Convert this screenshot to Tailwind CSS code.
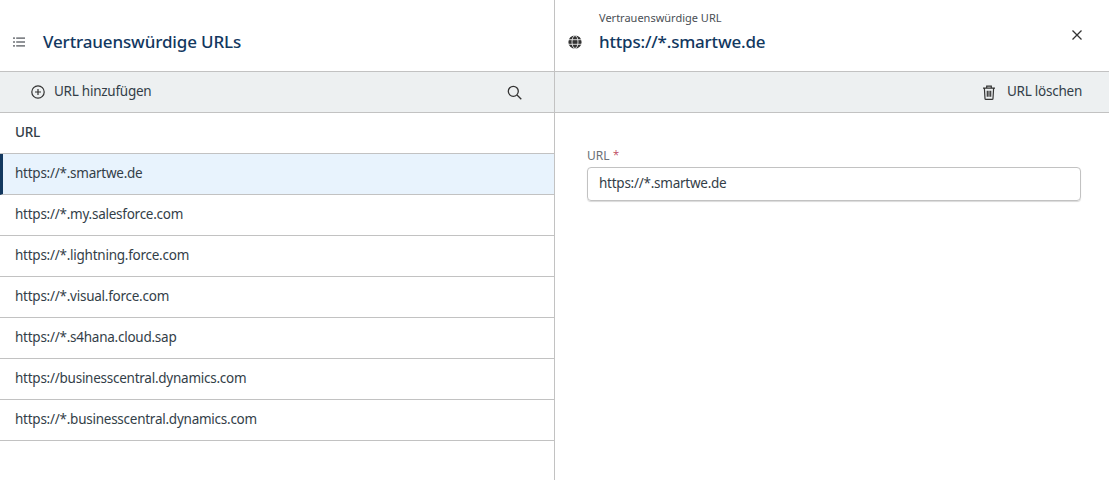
<!DOCTYPE html>
<html lang="de">
<head>
<meta charset="utf-8">
<title>Vertrauenswürdige URLs</title>
<script src="https://cdn.jsdelivr.net/npm/@tailwindcss/browser@4"></script>
</head>
<body class="bg-white font-['Noto_Sans',sans-serif] text-[13.5px] tracking-[-0.25px] text-[#333e48] overflow-hidden">
<div class="flex h-[480px] w-[1109px]">

  <!-- Left panel -->
  <div class="w-[555px] shrink-0 border-r border-[#c2c2c2] flex flex-col">
    <div class="h-[72px] shrink-0 border-b border-[#c2c2c2] flex items-center pl-[13px] pt-[12px]">
      <svg class="w-3 h-3 text-[#4a4f55]" viewBox="0 0 12 12" fill="currentColor"><rect x="0" y="1.5" width="2" height="1.2"/><rect x="3.2" y="1.5" width="8.8" height="1.2"/><rect x="0" y="5.4" width="2" height="1.2"/><rect x="3.2" y="5.4" width="8.8" height="1.2"/><rect x="0" y="9.3" width="2" height="1.2"/><rect x="3.2" y="9.3" width="8.8" height="1.2"/></svg>
      <h1 class="ml-[18px] text-[17px] tracking-[-0.14px] font-medium text-[#12385f]">Vertrauenswürdige URLs</h1>
    </div>
    <div class="h-[41px] shrink-0 bg-[#edf0f1] border-b border-[#c2c2c2] flex items-center justify-between pl-[31px] pr-[32px]">
      <div class="flex items-center gap-[9px]">
        <svg class="w-[14px] h-[14px] text-[#333]" viewBox="0 0 14 14" fill="none" stroke="currentColor" stroke-width="1.2"><circle cx="7" cy="7" r="6.2"/><path d="M7 4v6M4 7h6"/></svg>
        <span class="mt-[-2px]">URL hinzufügen</span>
      </div>
      <svg class="w-[15px] h-[15px] text-[#333]" viewBox="0 0 15 15" fill="none" stroke="currentColor" stroke-width="1.3"><circle cx="6.3" cy="6.3" r="5"/><path d="M10 10l4.3 4.3"/></svg>
    </div>
    <div class="h-[41px] shrink-0 border-b border-[#c2c2c2] flex items-center pb-[2px] pl-[15px] font-medium">URL</div>
    <div class="h-[41px] shrink-0 border-b border-[#c2c2c2] flex items-center pb-[2px] pl-[12px] bg-[#e8f3fd] border-l-[3px] border-l-[#12385f]">https://*.smartwe.de</div>
    <div class="h-[41px] shrink-0 border-b border-[#c2c2c2] flex items-center pb-[2px] pl-[15px]">https://*.my.salesforce.com</div>
    <div class="h-[41px] shrink-0 border-b border-[#c2c2c2] flex items-center pb-[2px] pl-[15px]">https://*.lightning.force.com</div>
    <div class="h-[41px] shrink-0 border-b border-[#c2c2c2] flex items-center pb-[2px] pl-[15px]">https://*.visual.force.com</div>
    <div class="h-[41px] shrink-0 border-b border-[#c2c2c2] flex items-center pb-[2px] pl-[15px]">https://*.s4hana.cloud.sap</div>
    <div class="h-[41px] shrink-0 border-b border-[#c2c2c2] flex items-center pb-[2px] pl-[15px]">https://businesscentral.dynamics.com</div>
    <div class="h-[41px] shrink-0 border-b border-[#c2c2c2] flex items-center pb-[2px] pl-[15px]">https://*.businesscentral.dynamics.com</div>
  </div>

  <!-- Right panel -->
  <div class="flex-1 flex flex-col">
    <div class="h-[72px] shrink-0 border-b border-[#c2c2c2] flex items-start pl-[13px] pr-[26px] relative">
      <svg class="w-[14px] h-[14px] text-[#333] mt-[35px]" viewBox="0 0 14 14" fill="currentColor"><circle cx="7" cy="7" r="6.6"/><g stroke="#fff" stroke-width="0.8" fill="none"><path d="M0.5 4.7h13M0.5 9.3h13"/><ellipse cx="7" cy="7" rx="3" ry="6.4"/></g></svg>
      <div class="ml-[17px] flex-1 pt-[11px]">
        <div class="text-[11px] tracking-normal leading-[14px] text-[#4a4f55] mb-[5px]">Vertrauenswürdige URL</div>
        <div class="text-[17px] tracking-[-0.2px] leading-[24px] font-medium text-[#12385f]">https://*.smartwe.de</div>
      </div>
      <svg class="w-[12px] h-[12px] text-[#333] mt-[29px]" viewBox="0 0 12 12" fill="none" stroke="currentColor" stroke-width="1.3"><path d="M1.5 1.5l9 9M10.5 1.5l-9 9"/></svg>
    </div>
    <div class="h-[41px] shrink-0 bg-[#edf0f1] border-b border-[#c2c2c2] flex items-center justify-end pr-[27px] gap-[11px]">
      <svg class="w-[14px] h-[15px] text-[#333]" viewBox="0 0 14 15" fill="none" stroke="currentColor" stroke-width="1.2"><path d="M1 3.2h12M4.7 3V1.2h4.6V3M2.4 3.2l.6 10.2c0 .6.4 1 1 1h6c.6 0 1-.4 1-1l.6-10.2M5.3 5.8v6M7 5.8v6M8.7 5.8v6"/></svg>
      <span class="mt-[-2px]">URL löschen</span>
    </div>
    <div class="pt-[35px] pl-[32px] pr-[28px]">
      <label class="block text-[12px] tracking-normal leading-[16px] text-[#6b7076] mb-[3px]">URL <span class="text-[#b3263f] font-light">*</span></label>
      <input type="text" value="https://*.smartwe.de" class="w-full h-[34px] rounded-[4px] border border-[#c2c2c2] shadow-[0_1px_1px_rgba(0,0,0,0.15)] px-[11px] pb-[2px] text-[13.5px] tracking-[-0.25px] text-[#333e48] outline-none">
    </div>
  </div>

</div>
</body>
</html>
